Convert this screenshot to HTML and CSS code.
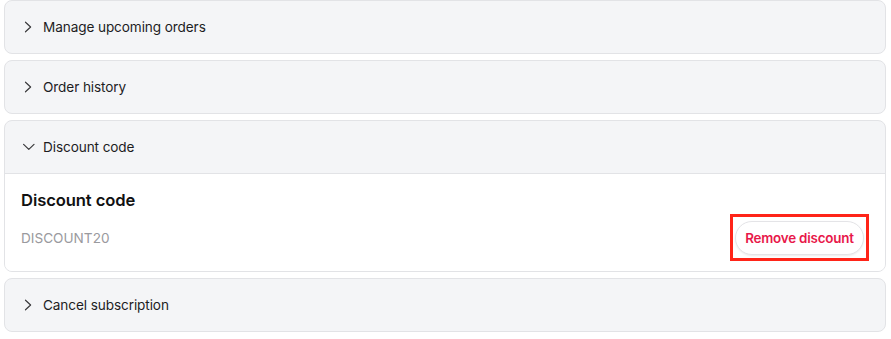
FILE: index.html
```html
<!DOCTYPE html>
<html lang="en">
<head>
    <meta charset="UTF-8">
    <meta name="viewport" content="width=device-width, initial-scale=1.0">
    <title>Subscription</title>
    <link rel="stylesheet" href="styles.css">
</head>
<body>

    <div class="acordeon">
        <div class="seccion">
            <div class="seccion-cabecera">
                <svg class="chevron" width="12" height="12" viewBox="0 0 12 12"><path d="M2.5 1.2 L7.6 6 L2.5 10.8" /></svg>
                <span>Manage upcoming orders</span>
            </div>
        </div>

        <div class="seccion">
            <div class="seccion-cabecera">
                <svg class="chevron" width="12" height="12" viewBox="0 0 12 12"><path d="M2.5 1.2 L7.6 6 L2.5 10.8" /></svg>
                <span>Order history</span>
            </div>
        </div>

        <div class="seccion abierta">
            <div class="seccion-cabecera">
                <svg class="chevron" width="12" height="12" viewBox="0 0 12 12"><path d="M0.6 3.4 L5.8 8.4 L11 3.4" /></svg>
                <span>Discount code</span>
            </div>
            <div class="seccion-cuerpo">
                <h3 class="descuento-titulo">Discount code</h3>
                <div class="descuento-fila">
                    <span class="descuento-codigo">DISCOUNT20</span>
                    <div class="marcado">
                        <button class="btn-quitar">Remove discount</button>
                    </div>
                </div>
            </div>
        </div>

        <div class="seccion">
            <div class="seccion-cabecera">
                <svg class="chevron" width="12" height="12" viewBox="0 0 12 12"><path d="M2.5 1.2 L7.6 6 L2.5 10.8" /></svg>
                <span>Cancel subscription</span>
            </div>
        </div>
    </div>

</body>
</html>
```

FILE: styles.css
```css
body {
    font-family: Inter, 'Liberation Sans', sans-serif;
    background: #ffffff;
    margin: 0;
    padding: 0 5px 0 4px;
    color: #1d1d1f;
}

.acordeon {
    display: flex;
    flex-direction: column;
    gap: 6px;
}

.seccion {
    background: #f4f5f7;
    border: 1px solid #e2e3e6;
    border-radius: 8px;
    overflow: hidden;
}

.seccion-cabecera {
    height: 52px;
    display: flex;
    align-items: center;
    gap: 8px;
    padding-left: 18px;
    font-size: 13.6px;
    letter-spacing: -0.1px;
    color: #1d1d1f;
}

.chevron {
    fill: none;
    stroke: #3a3a3c;
    stroke-width: 1.2;
    stroke-linecap: round;
    stroke-linejoin: round;
}

.abierta .seccion-cabecera {
    border-bottom: 1px solid #e2e3e6;
}

.seccion-cuerpo {
    background: #ffffff;
    padding: 15px 21px 16px 16px;
}

.descuento-titulo {
    margin: 0;
    font-size: 16.6px;
    font-weight: 600;
    line-height: 22px;
    letter-spacing: -0.1px;
    color: #111111;
}

.descuento-fila {
    display: flex;
    align-items: center;
    justify-content: space-between;
    margin-top: 10px;
}

.descuento-codigo {
    font-size: 13.6px;
    color: #9a9a9e;
}

.marcado {
    border: 3px solid #ff2418;
    padding: 4px 2px 3px 2px;
    margin: -7px -5px -6px -5px;
}

.btn-quitar {
    display: block;
    font-family: inherit;
    font-size: 13.4px;
    font-weight: 600;
    letter-spacing: -0.2px;
    color: #e8184a;
    background: #ffffff;
    border: 1px solid #e4e4e7;
    border-radius: 17px;
    height: 34px;
    width: 129px;
    padding: 0;
    box-shadow: 0 1px 2px rgba(0, 0, 0, 0.08);
    cursor: pointer;
}
```
